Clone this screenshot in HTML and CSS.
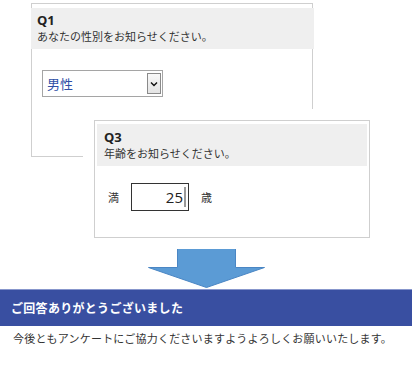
FILE: index.html
```html
<!DOCTYPE html>
<html lang="ja">
<head>
    <meta charset="UTF-8">
    <meta name="viewport" content="width=device-width, initial-scale=1.0">
    <title>アンケート</title>
    <link rel="stylesheet" href="styles.css">
</head>
<body>

<div class="scene">
    <!-- Q1 -->
    <div class="card card-q1">
        <div class="card-head">
            <div class="q-num">Q1</div>
            <div class="q-text">あなたの性別をお知らせください。</div>
        </div>
        <div class="card-body">
            <div class="select">
                <span class="select-value">男性</span>
                <span class="select-btn">
                    <svg width="8" height="6" viewBox="0 0 8 6"><path d="M1 1.5 L4 4.5 L7 1.5" fill="none" stroke="#111" stroke-width="1.4"/></svg>
                </span>
            </div>
        </div>
    </div>

    <!-- Q3 -->
    <div class="card card-q3">
        <div class="card-head">
            <div class="q-num">Q3</div>
            <div class="q-text">年齢をお知らせください。</div>
        </div>
        <div class="card-body age-row">
            <span class="unit">満</span>
            <div class="age-input"><span>25</span><i class="caret"></i></div>
            <span class="unit">歳</span>
        </div>
    </div>

    <svg class="arrow" width="120" height="42" viewBox="0 0 120 42">
        <polygon points="30.5,1.5 88.5,1.5 88.5,20.5 117.5,20.5 59.5,40.5 1.5,20.5 30.5,20.5" fill="#5b9bd5" stroke="#4a86c4" stroke-width="1"/>
    </svg>
</div>

<div class="thanks">ご回答ありがとうございました</div>
<p class="message">今後ともアンケートにご協力くださいますようよろしくお願いいたします。</p>

</body>
</html>
```

FILE: styles.css
```css
body {
    margin: 0;
    height: 368px;
    overflow: hidden;
    background-color: #fff;
    font-family: "Noto Sans CJK JP", "Noto Sans", sans-serif;
    color: #333;
}
.scene {
    display: flex;
    flex-direction: column;
    align-items: flex-start;
}
.card {
    background-color: #fff;
    border: 1px solid #cfcfcf;
    box-sizing: border-box;
}
.card-q1 {
    margin: 3px 0 0 31px;
    width: 282px;
    height: 154px;
}
.card-q3 {
    position: relative;
    margin: -37px 0 0 94px;
    width: 276px;
    height: 118px;
    box-shadow: 0 0 0 11px #fff;
}
.card-head {
    background-color: #efefef;
}
.card-q1 .card-head {
    margin: 4px -2px 0 -1px;
    padding: 4px 6px 5px 6px;
}
.card-q3 .card-head {
    margin: 3px 2px 0 2px;
    padding: 5px 7px 5px 7px;
}
.q-num {
    font-family: "Open Sans", "Noto Sans", sans-serif;
    font-weight: bold;
    font-size: 13px;
    line-height: 17px;
    color: #222;
}
.q-text {
    font-size: 11px;
    line-height: 15px;
    color: #333;
}
.card-q1 .card-body {
    padding: 21px 0 0 10px;
}
.select {
    display: flex;
    align-items: center;
    justify-content: space-between;
    width: 121px;
    height: 27px;
    box-sizing: border-box;
    border: 1px solid #a5a5a5;
    padding: 0 1px 0 4px;
}
.select-value {
    font-size: 13px;
    color: #2e4fa6;
}
.select-btn {
    display: flex;
    align-items: center;
    justify-content: center;
    width: 14px;
    height: 21px;
    box-sizing: border-box;
    border: 1px solid #8a8a8a;
    background: linear-gradient(#f8f8f8, #e4e4e4);
}
.age-row {
    display: flex;
    align-items: center;
    padding: 17px 0 0 13px;
}
.unit {
    font-size: 11px;
    color: #333;
}
.age-input {
    display: flex;
    align-items: center;
    justify-content: flex-end;
    width: 58px;
    height: 28px;
    box-sizing: border-box;
    margin: 0 12px 0 12px;
    border: 1px solid #333;
    padding-right: 2px;
    font-family: "Open Sans", "Noto Sans", sans-serif;
    font-size: 15px;
    color: #222;
}
.caret {
    width: 2px;
    height: 20px;
    margin-left: 1px;
    background-color: #999;
}
.arrow {
    display: block;
    margin: 9px 0 0 147px;
}
.thanks {
    height: 36px;
    border-top: 1px solid #8796cc;
    background-color: #394fa1;
    color: #fff;
    font-weight: bold;
    font-size: 12px;
    letter-spacing: 0.3px;
    line-height: 36px;
    padding-left: 11px;
}
.message {
    margin: 4px 0 0 13px;
    font-size: 11px;
    letter-spacing: 0.2px;
    line-height: 16px;
    color: #333;
}
```
